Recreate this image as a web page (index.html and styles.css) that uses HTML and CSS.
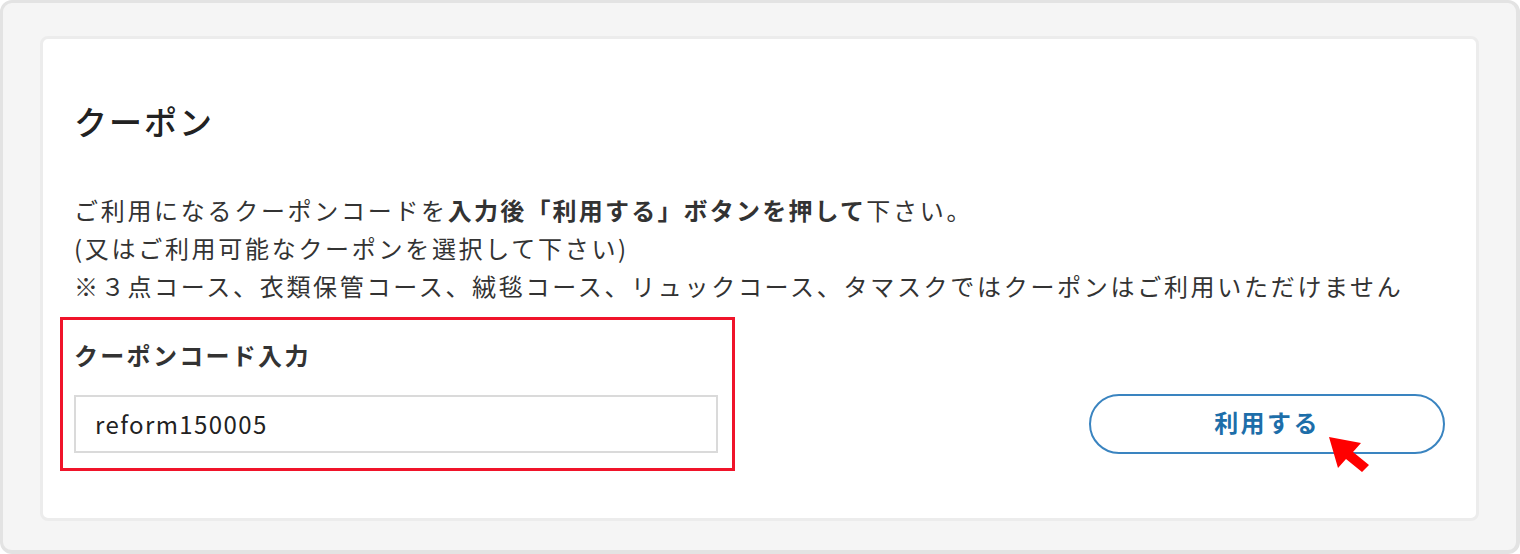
FILE: index.html
```html
<!DOCTYPE html>
<html lang="ja">
<head>
<meta charset="utf-8">
<title>クーポン</title>
<link rel="stylesheet" href="styles.css">
</head>
<body>
<div class="frame">
  <section class="card">
    <h2 class="title">クーポン</h2>
    <p class="desc">
      <span class="line">ご利用になるクーポンコードを<b>入力後「利用する」ボタンを押して</b>下さい。</span>
      <span class="line">(又はご利用可能なクーポンを選択して下さい)</span>
      <span class="line">※３点コース、衣類保管コース、絨毯コース、リュックコース、タマスクではクーポンはご利用いただけません</span>
    </p>
    <div class="form-row">
      <div class="field">
        <label class="label" for="code">クーポンコード入力</label>
        <input class="input" id="code" type="text" value="reform150005">
        <div class="highlight"></div>
      </div>
      <div class="action">
        <button class="btn" type="button">利用する</button>
        <svg class="cursor" width="48" height="42" viewBox="0 0 48 42">
          <polygon points="4,4 36,10 28,19 44,32 37,39 21,26 13,35" fill="#ff0000"/>
        </svg>
      </div>
    </div>
  </section>
</div>
</body>
</html>
```
FILE: styles.css
```css
* { box-sizing: border-box; }
html, body { margin: 0; padding: 0; }
body {
  width: 1520px;
  height: 554px;
  font-family: "Noto Sans CJK JP", "Noto Sans", sans-serif;
  color: #333;
  background: #fff;
}
.frame {
  width: 1520px;
  height: 554px;
  background: #f5f5f5;
  border: 3px solid #e3e3e3;
  border-right-width: 4px;
  border-bottom-width: 4px;
  border-radius: 12px;
  padding: 33px 37px 29px 37px;
}
.card {
  height: 485px;
  background: #fff;
  border: 3px solid #ececec;
  border-radius: 8px;
  padding: 62px 31px 0 31px;
}
.title {
  margin: 0;
  font-size: 33px;
  line-height: 40px;
  font-weight: 500;
  color: #222;
  letter-spacing: 2px;
}
.desc {
  margin: 50px 0 0 0;
  font-size: 24px;
  line-height: 38px;
  letter-spacing: 2.7px;
  color: #333;
}
.desc .line { display: block; white-space: nowrap; }
.desc b { font-weight: 700; letter-spacing: 2.2px; }
.form-row {
  display: flex;
  justify-content: space-between;
  align-items: flex-start;
  margin-top: 35px;
}
.field {
  position: relative;
  width: 644px;
  display: flex;
  flex-direction: column;
}
.label {
  font-size: 24px;
  line-height: 30px;
  font-weight: 700;
  letter-spacing: 2.3px;
  color: #333;
}
.input {
  margin-top: 25px;
  width: 644px;
  height: 58px;
  border: 2px solid #dadada;
  border-radius: 0;
  padding: 0 19px 2px 19px;
  font-family: "Noto Sans CJK JP", "Noto Sans", sans-serif;
  font-size: 24px;
  letter-spacing: 1.4px;
  color: #222;
  background: #fff;
  outline: none;
}
.highlight {
  position: absolute;
  left: -14px;
  top: -23px;
  width: 675px;
  height: 154px;
  border: 3px solid #f0142a;
  pointer-events: none;
}
.action {
  position: relative;
  margin-top: 54px;
}
.btn {
  display: block;
  width: 356px;
  height: 60px;
  border: 2px solid #3a84c0;
  border-radius: 30px;
  background: #fff;
  color: #1d6ea9;
  font-family: "Noto Sans CJK JP", "Noto Sans", sans-serif;
  font-size: 24px;
  font-weight: 700;
  letter-spacing: 2.4px;
  padding: 0 0 5px 0;
}
.cursor {
  position: absolute;
  left: 236px;
  top: 39px;
}
```
